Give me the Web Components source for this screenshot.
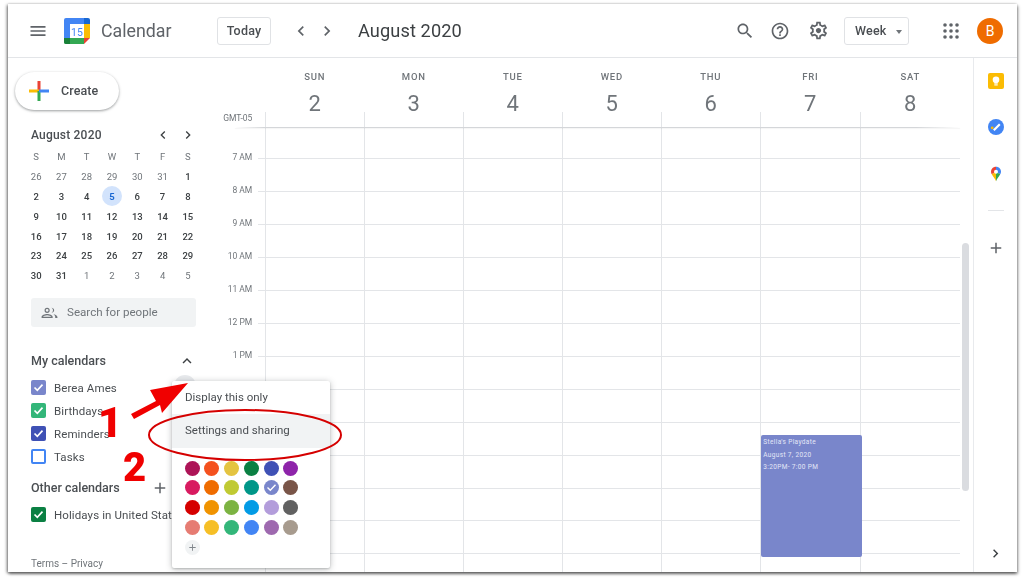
<!DOCTYPE html>
<html>
<head>
<meta charset="utf-8">
<title>Calendar</title>
<style>
  html, body { margin: 0; height: 100%; background: #fff; overflow: hidden; }
  body { padding: 4px 7px 8px 8px; box-sizing: border-box; font-family: Roboto, "Liberation Sans", sans-serif; color: #3c4043; }
</style>
</head>
<body>
<cal-app>
  <cal-topbar></cal-topbar>
  <cal-sidebar slot="side">
    <cal-item color="#7986cb" hover>Berea Ames</cal-item>
    <cal-item color="#33b679">Birthdays</cal-item>
    <cal-item color="#3f51b5">Reminders</cal-item>
    <cal-item color="#4285f4" empty>Tasks</cal-item>
    <cal-item slot="other" color="#0b8043">Holidays in United States</cal-item>
  </cal-sidebar>
  <cal-week slot="main">
    <cal-event>
      <div>Stella's Playdate</div>
      <div>August 7, 2020</div>
      <div>3:20PM- 7:00 PM</div>
    </cal-event>
  </cal-week>
  <cal-rail slot="rail"></cal-rail>
  <cal-popup slot="over"></cal-popup>
  <cal-annotations slot="over"></cal-annotations>
</cal-app>

<script>
const ICONS = {
  menu: "M3 18h18v-2H3v2zm0-5h18v-2H3v2zm0-7v2h18V6H3z",
  left: "M15.41 7.41L14 6l-6 6 6 6 1.41-1.41L10.83 12z",
  right: "M10 6L8.59 7.41 13.17 12l-4.58 4.59L10 18l6-6z",
  up: "M12 8l-6 6 1.41 1.41L12 10.83l4.59 4.58L18 14z",
  plus: "M19 13h-6v6h-2v-6H5v-2h6V5h2v6h6v2z",
  search: "M15.5 14h-.79l-.28-.27C15.41 12.59 16 11.11 16 9.5 16 5.91 13.09 3 9.5 3S3 5.91 3 9.5 5.91 16 9.5 16c1.61 0 3.09-.59 4.23-1.57l.27.28v.79l5 4.99L20.49 19l-4.99-5zm-6 0C7.01 14 5 11.99 5 9.5S7.01 5 9.5 5 14 7.01 14 9.5 11.99 14 9.5 14z",
  help: "M11 18h2v-2h-2v2zm1-16C6.48 2 2 6.48 2 12s4.48 10 10 10 10-4.48 10-10S17.52 2 12 2zm0 18c-4.41 0-8-3.59-8-8s3.59-8 8-8 8 3.59 8 8-3.59 8-8 8zm0-14c-2.21 0-4 1.79-4 4h2c0-1.1.9-2 2-2s2 .9 2 2c0 2-3 1.75-3 5h2c0-2.25 3-2.5 3-5 0-2.21-1.79-4-4-4z",
  gear: "M19.43 12.98c.04-.32.07-.64.07-.98 0-.34-.03-.66-.07-.98l2.11-1.65c.19-.15.24-.42.12-.64l-2-3.46c-.09-.16-.26-.25-.44-.25-.06 0-.12.01-.17.03l-2.49 1c-.52-.4-1.08-.73-1.69-.98l-.38-2.65C14.46 2.18 14.25 2 14 2h-4c-.25 0-.46.18-.49.42l-.38 2.65c-.61.25-1.17.59-1.69.98l-2.49-1c-.06-.02-.12-.03-.18-.03-.17 0-.34.09-.43.25l-2 3.46c-.13.22-.07.49.12.64l2.11 1.65c-.04.32-.07.65-.07.98 0 .33.03.66.07.98l-2.11 1.65c-.19.15-.24.42-.12.64l2 3.46c.09.16.26.25.44.25.06 0 .12-.01.17-.03l2.49-1c.52.4 1.08.73 1.69.98l.38 2.65c.03.24.24.42.49.42h4c.25 0 .46-.18.49-.42l.38-2.65c.61-.25 1.17-.59 1.69-.98l2.49 1c.06.02.12.03.18.03.17 0 .34-.09.43-.25l2-3.46c.12-.22.07-.49-.12-.64l-2.11-1.65zm-1.98-1.71c.04.31.05.52.05.73 0 .21-.02.43-.05.73l-.14 1.13.89.7 1.08.84-.7 1.21-1.27-.51-1.04-.42-.9.68c-.43.32-.84.56-1.25.73l-1.06.43-.16 1.13-.2 1.35h-1.4l-.19-1.35-.16-1.13-1.06-.43c-.43-.18-.83-.41-1.23-.71l-.91-.7-1.06.43-1.27.51-.7-1.21 1.08-.84.89-.7-.14-1.13c-.03-.31-.05-.54-.05-.74s.02-.43.05-.73l.14-1.13-.89-.7-1.08-.84.7-1.21 1.27.51 1.04.42.9-.68c.43-.32.84-.56 1.25-.73l1.06-.43.16-1.13.2-1.35h1.39l.19 1.35.16 1.13 1.06.43c.43.18.83.41 1.23.71l.91.7 1.06-.43 1.27-.51.7 1.21-1.07.85-.89.7.14 1.13zM12 9c-1.66 0-3 1.34-3 3s1.34 3 3 3 3-1.34 3-3-1.34-3-3-3z",
  people: "M9 12.5a3.25 3.25 0 1 0 0-6.5 3.25 3.25 0 0 0 0 6.5zm0-5a1.75 1.75 0 1 1 0 3.5 1.75 1.75 0 0 1 0-3.5zM9 14c-3 0-7 1.4-7 3.6V19h14v-1.4C16 15.4 12 14 9 14zm-5.3 3.5c.5-.9 3.3-2 5.3-2s4.8 1.1 5.3 2H3.7zM14.5 6.1c1.2.6 1.9 1.7 1.9 3.1s-.7 2.5-1.9 3.1c1.7-.1 3.4-1.2 3.4-3.1s-1.7-3-3.4-3.1zM17 14.3c1.3.8 2.2 1.9 2.2 3.3V19H22v-1.4c0-1.7-2.7-2.9-5-3.3z"
};

function svgIcon(name, size, color) {
  return '<svg width="' + size + '" height="' + size + '" viewBox="0 0 24 24" fill="' + color + '"><path d="' + ICONS[name] + '"/></svg>';
}

// every element here is just a style plus markup in an open shadow root
function register(name, style, html, init) {
  customElements.define(name, class extends HTMLElement {
    constructor() {
      super();
      const shadow = this.attachShadow({ mode: "open" });
      const template = document.createElement("template");
      const markup = typeof html === "function" ? html(this) : html;
      template.innerHTML = "<style>" + style + "</style>" + markup;
      shadow.appendChild(template.content.cloneNode(true));
    }
    connectedCallback() {
      if (init) init(this.shadowRoot, this);
    }
  });
}

register("cal-app", `
  :host { display: flex; flex-direction: column; position: relative; width: 1009px; height: 568px; background: #fff;
    box-shadow: -1px 1px 3px rgba(0,0,0,.55), 1px 2px 3px rgba(0,0,0,.4), 0 -1px 2px rgba(0,0,0,.06); filter: blur(.3px); }
  .body { display: flex; flex: 1; min-height: 0; }
`, `
  <slot></slot>
  <div class="body">
    <slot name="side"></slot>
    <slot name="main"></slot>
    <slot name="rail"></slot>
  </div>
  <slot name="over"></slot>
`);

register("cal-topbar", `
  :host { display: flex; align-items: center; height: 53px; border-bottom: 1px solid #e3e5e8; padding: 0 14px 0 18px; flex: none; }
  .ico { display: flex; align-items: center; justify-content: center; width: 24px; height: 24px; flex: none; }
  .logo { margin-left: 14px; width: 26px; height: 26px; flex: none; }
  .brand { margin-left: 11px; width: 116px; font-size: 17.8px; color: #5f6368; flex: none; }
  .btn { box-sizing: border-box; height: 28px; border: 1px solid #e0e2e5; border-radius: 3px; display: flex; align-items: center; font-size: 12.5px; font-weight: 500; color: #4a4e52; flex: none; letter-spacing: .2px; }
  .today { width: 54px; justify-content: center; }
  .nav { margin-left: 17px; width: 26px; }
  .nav + .nav { margin-left: 0; }
  .title { margin-left: 18px; font-size: 18.2px; color: #3c4043; letter-spacing: .1px; flex: none; }
  .right { margin-left: auto; display: flex; align-items: center; }
  .week { width: 65px; margin: 0 30px 0 14px; padding-left: 10px; position: relative; }
  .caret { position: absolute; right: 6px; top: 12px; width: 0; height: 0; border: 3.5px solid transparent; border-top: 4px solid #70757a; border-bottom: 0; }
  .avatar { margin-left: 14px; width: 26px; height: 26px; border-radius: 50%; background: #ef6c00; color: #fff; font-size: 14px; display: flex; align-items: center; justify-content: center; }
  .gap11 { margin-left: 11px; }
  .gap14 { margin-left: 14px; }
`, `
  <div class="ico">${svgIcon("menu", 20, "#5f6368")}</div>
  <svg class="logo" viewBox="0 0 26 26">
    <path d="M2 0h18v6H6v14H0V2a2 2 0 0 1 2-2z" fill="#4285f4"/>
    <path d="M20 0h4a2 2 0 0 1 2 2v4h-6z" fill="#1967d2"/>
    <rect x="20" y="6" width="6" height="14" fill="#fbbc04"/>
    <path d="M6 20h14v6H2a2 2 0 0 1-2-2v-4h6z" fill="#34a853"/>
    <path d="M0 20h6v6H2a2 2 0 0 1-2-2z" fill="#188038"/>
    <path d="M20 20h6l-6 6z" fill="#ea4335"/>
    <rect x="6" y="6" width="14" height="14" fill="#fff"/>
    <text x="13" y="17.5" text-anchor="middle" font-family="Roboto, sans-serif" font-size="10.5" fill="#4285f4">15</text>
  </svg>
  <div class="brand">Calendar</div>
  <div class="btn today">Today</div>
  <div class="ico nav">${svgIcon("left", 20, "#5f6368")}</div>
  <div class="ico nav">${svgIcon("right", 20, "#5f6368")}</div>
  <div class="title">August 2020</div>
  <div class="right">
    <div class="ico">${svgIcon("search", 20, "#5f6368")}</div>
    <div class="ico gap11">${svgIcon("help", 20, "#5f6368")}</div>
    <div class="ico gap14">${svgIcon("gear", 21, "#5f6368")}</div>
    <div class="btn week">Week<span class="caret"></span></div>
    <div class="ico">
      <svg width="16" height="16" viewBox="0 0 16 16" fill="#5f6368">
        <circle cx="2" cy="2" r="1.8"/><circle cx="8" cy="2" r="1.8"/><circle cx="14" cy="2" r="1.8"/>
        <circle cx="2" cy="8" r="1.8"/><circle cx="8" cy="8" r="1.8"/><circle cx="14" cy="8" r="1.8"/>
        <circle cx="2" cy="14" r="1.8"/><circle cx="8" cy="14" r="1.8"/><circle cx="14" cy="14" r="1.8"/>
      </svg>
    </div>
    <div class="avatar">B</div>
  </div>
`);

register("cal-sidebar", `
  :host { display: flex; flex-direction: column; width: 215px; flex: none; box-sizing: border-box; padding-left: 23px; padding-right: 27px; overflow: hidden; }
  .create { box-sizing: border-box; margin: 14px 0 0 -16px; width: 104px; height: 38px; border-radius: 19px; background: #fff; flex: none;
    box-shadow: 0 1px 3px rgba(60,64,67,.4), 0 1px 2px rgba(60,64,67,.15); display: flex; align-items: center; padding: 0 0 2px 13px; font-size: 12.5px; font-weight: 500; color: #4a4e52; letter-spacing: .1px; }
  .create svg { margin: 2px 11px 0 0; }
  .head { display: flex; align-items: center; justify-content: space-between; height: 20px; font-size: 12.5px; font-weight: 500; color: #4a4e52; flex: none; }
  .mine { margin-top: 24px; margin-right: 0; }
  .other { margin-top: 9.5px; margin-right: 27px; }
  .list { margin-top: 5.5px; display: flex; flex-direction: column; }
  .others { margin-top: 5.5px; }
  .search { box-sizing: border-box; margin-top: 12px; height: 29px; width: 165px; border-radius: 3px; background: #f1f3f4; display: flex; align-items: center; padding-left: 9px; color: #70757a; font-size: 11.6px; flex: none; }
  .search svg { margin-right: 8px; }
  .foot { margin-top: auto; height: 14px; margin-bottom: 1px; font-size: 10px; line-height: 14px; color: #70757a; flex: none; white-space: nowrap; }
`, `
  <div class="create">
    <svg width="22" height="22" viewBox="0 0 22 22">
      <rect x="9.5" y="1" width="3" height="10" fill="#ea4335"/>
      <rect x="1" y="9.5" width="10" height="3" fill="#fbbc04"/>
      <rect x="9.5" y="11" width="3" height="10" fill="#34a853"/>
      <rect x="11" y="9.5" width="10" height="3" fill="#4285f4"/>
    </svg>
    Create
  </div>
  <cal-minimonth></cal-minimonth>
  <div class="search">${svgIcon("people", 19, "#70757a")}Search for people</div>
  <div class="head mine"><span>My calendars</span>${svgIcon("up", 18, "#3c4043")}</div>
  <div class="list"><slot></slot></div>
  <div class="head other"><span>Other calendars</span>${svgIcon("plus", 18, "#5f6368")}</div>
  <div class="others"><slot name="other"></slot></div>
  <div class="foot">Terms – Privacy</div>
`);

register("cal-minimonth", `
  :host { display: block; margin-top: 15px; flex: none; }
  .top { display: flex; align-items: center; height: 20px; font-size: 12px; font-weight: 500; color: #4a4e52; letter-spacing: .2px; }
  .top span { flex: 1; }
  .top svg { display: block; width: 16px; height: 16px; }
  .top .l { margin-right: 9px; }
  .top .r { margin-right: 0; }
  .grid { margin: 2px 0 0 -7.5px; width: 177px; display: grid; grid-template-columns: repeat(7, 1fr); grid-auto-rows: 19.8px; font-size: 9.5px; }
  .c { display: flex; align-items: center; justify-content: center; color: #70757a; }
  .on { color: #3c4043; font-weight: 500; }
  .today { position: relative; color: #1967d2; font-weight: 700; z-index: 0; }
  .today::before { content: ""; position: absolute; width: 20px; height: 20px; border-radius: 50%; background: #d2e3fc; z-index: -1; left: 50%; top: 50%; transform: translate(-50%, -50%); }
`, `
  <div class="top"><span>August 2020</span><div class="l">${svgIcon("left", 16, "#3c4043")}</div><div class="r">${svgIcon("right", 16, "#3c4043")}</div></div>
  <div class="grid"></div>
`, (root) => {
  let html = "";
  for (const d of ["S", "M", "T", "W", "T", "F", "S"]) html += '<div class="c">' + d + "</div>";
  const days = [26, 27, 28, 29, 30, 31];
  for (let i = 1; i <= 31; i++) days.push(i);
  for (let i = 1; i <= 5; i++) days.push(i);
  days.forEach((d, i) => {
    const inMonth = i >= 6 && i < 37;
    const cls = d === 5 && inMonth ? "c today" : inMonth ? "c on" : "c";
    html += '<div class="' + cls + '">' + d + "</div>";
  });
  root.querySelector(".grid").innerHTML = html;
});

register("cal-item", `
  :host { display: flex; align-items: center; height: 23px; font-size: 11.5px; color: #4a4e52; white-space: nowrap; position: relative; letter-spacing: .1px; }
  .box { box-sizing: border-box; width: 15px; height: 15px; border-radius: 2px; margin-right: 8px; flex: none; display: flex; align-items: center; justify-content: center; }
  .dot { position: absolute; left: 143px; top: -1px; width: 22px; height: 22px; border-radius: 50%; background: #e8eaed; }
`, (el) => {
  const color = el.getAttribute("color");
  const empty = el.hasAttribute("empty");
  const style = empty ? "border:2px solid " + color : "background:" + color;
  const check = empty ? "" : '<svg width="11" height="11" viewBox="0 0 11 11"><path d="M1.5 5.5l2.8 2.8 5.2-5.6" fill="none" stroke="#fff" stroke-width="1.7"/></svg>';
  const dot = el.hasAttribute("hover") ? '<span class="dot"></span>' : "";
  return '<span class="box" style="' + style + '">' + check + "</span><slot></slot>" + dot;
});

register("cal-week", `
  :host { display: flex; flex-direction: column; width: 750px; flex: none; position: relative; overflow: hidden; }
  .days { display: grid; grid-template-columns: repeat(5, 99px) 100px 100px; margin-left: 42.3px; height: 54px; flex: none; }
  .dh { text-align: center; color: #70757a; }
  .dh b { display: block; margin-top: 12px; font-weight: 500; font-size: 9.5px; line-height: 14px; letter-spacing: .8px; }
  .dh i { display: block; margin-top: 8px; font-style: normal; font-weight: 400; font-size: 22px; line-height: 24px; }
  .grid { flex: 1; display: flex; position: relative; min-height: 0; }
  .gutter { width: 42.3px; flex: none; font-size: 8.5px; color: #70757a; }
  .g { position: relative; height: 32.96px; }
  .g.tz { height: 15px; font-size: 8.5px; }
  .g.morning { height: 31px; }
  .g span { position: absolute; right: 13px; bottom: -5px; line-height: 11px; white-space: nowrap; }
  .g.tz span { bottom: 3px; }
  .g:not(.tz)::after { content: ""; position: absolute; right: 0; bottom: -1px; width: 7px; height: 1px; background: #e3e5e8; }
  .cols { display: grid; grid-template-columns: repeat(5, 99px) 100px 100px; flex: none; }
  .col { border-left: 1px solid #e3e5e8; position: relative; }
  .h { box-sizing: border-box; height: 32.96px; border-bottom: 1px solid #e3e5e8; }
  .h.tz { height: 16px; border-bottom: 0; }
  .h.morning { height: 31px; }
  .line { position: absolute; left: 12px; top: 15px; width: 725px; height: 1px; background: linear-gradient(90deg, transparent, #d4d6d9 4%, #d4d6d9 94%, transparent); box-shadow: 0 1px 1px rgba(60,64,67,.06); }
  .scroll { position: absolute; right: 4px; top: 185px; width: 7px; height: 248px; border-radius: 4px; background: #dadce0; }
  ::slotted(cal-event) { position: absolute; top: 323px; left: 0; }
`, `
  <div class="days"></div>
  <div class="grid">
    <div class="gutter"></div>
    <div class="cols"></div>
    <div class="line"></div>
  </div>
  <div class="scroll"></div>
`, (root) => {
  const names = ["SUN", "MON", "TUE", "WED", "THU", "FRI", "SAT"];
  root.querySelector(".days").innerHTML = names.map((n, i) =>
    '<div class="dh"><b>' + n + "</b><i>" + (i + 2) + "</i></div>").join("");
  // later hours sit under the popup, so only these have labels
  const hours = ["7 AM", "8 AM", "9 AM", "10 AM", "11 AM", "12 PM", "1 PM"];
  let gutter = '<div class="g tz"><span>GMT-05</span></div>';
  hours.forEach((h, i) => {
    gutter += '<div class="g' + (i === 0 ? " morning" : "") + '"><span>' + h + "</span></div>";
  });
  root.querySelector(".gutter").innerHTML = gutter;
  const cols = root.querySelector(".cols");
  let rows = '<div class="h tz"></div><div class="h morning"></div>';
  for (let i = 0; i < 13; i++) rows += '<div class="h"></div>';
  cols.innerHTML = names.map(() => '<div class="col">' + rows + "</div>").join("");
  // the event belongs to Friday's column
  cols.children[5].appendChild(document.createElement("slot"));
});

register("cal-event", `
  :host { display: block; box-sizing: border-box; width: 101px; height: 122px; background: #7986cb; border-radius: 2px; padding: 1px 2px 0; color: #e4e7f7; font-size: 6.5px; line-height: 12.5px; letter-spacing: .35px; z-index: 1; }
`, `<slot></slot>`);

register("cal-rail", `
  :host { display: flex; flex-direction: column; align-items: center; width: 44px; flex: none; box-sizing: border-box; border-left: 1px solid #e8eaed; padding-top: 15px; }
  svg { display: block; flex: none; }
  .a { margin-top: 30px; }
  .b { margin-top: 31px; }
  .rule { width: 16px; height: 1px; background: #e3e5e8; margin-top: 28px; }
  .plus { margin-top: 28px; }
  .end { margin-top: auto; margin-bottom: 10px; }
`, `
  <svg width="16" height="16" viewBox="0 0 16 16">
    <rect width="16" height="16" rx="2" fill="#fbbc04"/>
    <circle cx="8" cy="6.7" r="3.3" fill="#fff"/>
    <rect x="6.3" y="9" width="3.4" height="1.7" fill="#fff"/>
    <rect x="6.3" y="11.3" width="3.4" height="1.2" fill="#fff"/>
  </svg>
  <svg class="a" width="16" height="16" viewBox="0 0 16 16">
    <circle cx="8" cy="8" r="8" fill="#4285f4"/>
    <circle cx="4.2" cy="8.8" r="1.4" fill="#fbbc04"/>
    <path d="M5.8 11.2l6-6" stroke="#fff" stroke-width="2.2" fill="none"/>
  </svg>
  <svg class="b" width="16" height="16" viewBox="0 0 24 24">
    <path d="M12 1C7.6 1 4.5 4.4 4.5 8.5c0 1.5.5 2.8 1.2 3.9L12 8.5V1z" fill="#ea4335"/>
    <path d="M12 1v7.5l6.3 3.9c.7-1.1 1.2-2.4 1.2-3.9C19.5 4.4 16.4 1 12 1z" fill="#4285f4"/>
    <path d="M5.7 12.4L12 8.5l1.2 4.5-1.2 10c-1-4-4.6-7.2-6.3-10.6z" fill="#fbbc04"/>
    <path d="M12 8.5l6.3 3.9C16.6 15.8 13 19 12 23z" fill="#34a853"/>
    <circle cx="12" cy="8.5" r="3" fill="#fff"/>
  </svg>
  <div class="rule"></div>
  <div class="plus">${svgIcon("plus", 18, "#5f6368")}</div>
  <div class="end">${svgIcon("right", 17, "#3c4043")}</div>
`);

const SWATCHES = [
  "#ad1457", "#f4511e", "#e4c441", "#0b8043", "#3f51b5", "#8e24aa",
  "#d81b60", "#ef6c00", "#c0ca33", "#009688", "#7986cb", "#795548",
  "#d50000", "#f09300", "#7cb342", "#039be5", "#b39ddb", "#616161",
  "#e67c73", "#f6bf26", "#33b679", "#4285f4", "#9e69af", "#a79b8e"
];

register("cal-popup", `
  :host { display: block; position: absolute; left: 164px; top: 377px; width: 158px; height: 187px; background: #fff; border-radius: 2px; box-shadow: 0 1px 6px rgba(60,64,67,.35), 0 1px 2px rgba(60,64,67,.2); font-size: 11.5px; color: #4a4e52; }
  .item { box-sizing: border-box; height: 33px; display: flex; align-items: center; padding: 0 0 1px 13px; }
  .item.hi { height: 34px; padding-bottom: 2px; background: #f1f3f4; }
  .swatches { display: grid; grid-template-columns: repeat(6, 15px); grid-auto-rows: 15px; gap: 4.8px; padding: 12.5px 0 0 12.5px; }
  .s { border-radius: 50%; display: flex; align-items: center; justify-content: center; }
  .add { background: #f1f3f4; }
`, `
  <div class="item">Display this only</div>
  <div class="item hi">Settings and sharing</div>
  <div class="swatches"></div>
`, (root) => {
  let html = SWATCHES.map((c) => {
    const mark = c === "#7986cb" ? '<svg width="11" height="11" viewBox="0 0 11 11"><path d="M1.5 5.5l2.8 2.8 5.2-5.6" fill="none" stroke="#fff" stroke-width="1.4"/></svg>' : "";
    return '<div class="s" style="background:' + c + '">' + mark + "</div>";
  }).join("");
  html += '<div class="s add">' + svgIcon("plus", 11, "#80868b") + "</div>";
  root.querySelector(".swatches").innerHTML = html;
});

register("cal-annotations", `
  :host { display: block; position: absolute; left: -8px; top: -4px; width: 1024px; height: 580px; pointer-events: none; }
  svg { display: block; }
  text { font-family: Roboto, sans-serif; font-weight: 900; fill: #f00000; }
`, `
  <svg width="1024" height="580" viewBox="0 0 1024 580">
    <polygon points="188,383 150,390 156,401 131,414 134,419 160,405 162,413" fill="#f00000"/>
    <ellipse cx="245" cy="435" rx="96" ry="25" fill="none" stroke="#d50000" stroke-width="2"/>
    <text x="98" y="437" font-size="42">1</text>
    <text x="123" y="481" font-size="40">2</text>
  </svg>
`);
</script>
</body>
</html>
